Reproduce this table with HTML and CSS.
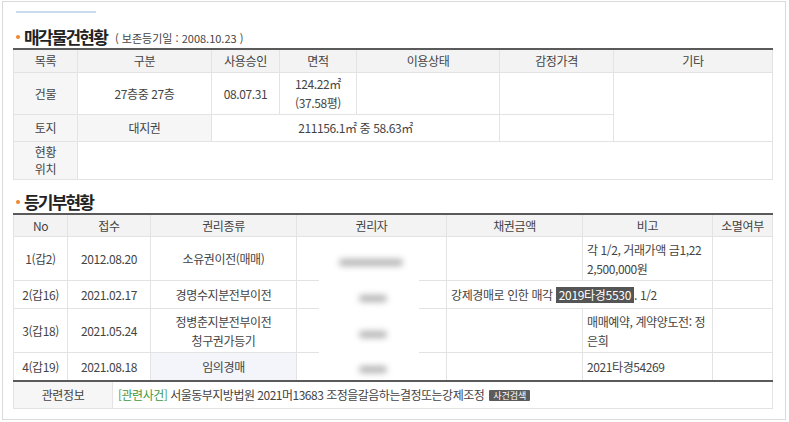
FILE: index.html
```html
<!DOCTYPE html>
<html lang="ko">
<head>
<meta charset="utf-8">
<title>매각물건현황</title>
<link rel="stylesheet" href="styles.css">
</head>
<body>
<div class="frame">
  <div class="topbar"></div>
  <h3 class="title"><span class="dot"></span>매각물건현황<small class="sub">( 보존등기일 : 2008.10.23 )</small></h3>
  <table class="tbl t1">
    <colgroup>
      <col style="width:64px"><col style="width:134px"><col style="width:68px"><col style="width:77px"><col style="width:143px"><col style="width:114px"><col style="width:159px">
    </colgroup>
    <tr class="hd">
      <th>목록</th><th>구분</th><th>사용승인</th><th>면적</th><th>이용상태</th><th>감정가격</th><th>기타</th>
    </tr>
    <tr class="r-bld">
      <td class="lbl">건물</td><td>27층중 27층</td><td>08.07.31</td><td>124.22㎡<br>(37.58평)</td><td></td><td></td><td rowspan="2"></td>
    </tr>
    <tr class="r-land">
      <td class="lbl">토지</td><td class="lbl">대지권</td><td colspan="3">211156.1㎡ 중 58.63㎡</td><td></td>
    </tr>
    <tr class="r-loc">
      <td class="lbl loc">현황<br>위치</td><td colspan="6"></td>
    </tr>
  </table>

  <h3 class="title t2title"><span class="dot"></span>등기부현황</h3>
  <table class="tbl t2">
    <colgroup>
      <col style="width:54px"><col style="width:83px"><col style="width:146px"><col style="width:150px"><col style="width:136px"><col style="width:130px"><col style="width:60px">
    </colgroup>
    <tr class="hd">
      <th>No</th><th>접수</th><th>권리종류</th><th>권리자</th><th>채권금액</th><th>비고</th><th>소멸여부</th>
    </tr>
    <tr class="r2">
      <td>1(갑2)</td><td>2012.08.20</td><td>소유권이전(매매)</td><td></td><td></td><td class="left">각 1/2, 거래가액 금1,22<br>2,500,000원</td><td></td>
    </tr>
    <tr class="r1">
      <td>2(갑16)</td><td>2021.02.17</td><td>경명수지분전부이전</td><td></td><td colspan="2" class="left">강제경매로 인한 매각 <span class="badge">2019타경5530</span>. 1/2</td><td></td>
    </tr>
    <tr class="r2">
      <td>3(갑18)</td><td>2021.05.24</td><td>정병춘지분전부이전<br>청구권가등기</td><td></td><td></td><td class="left">매매예약, 계약양도전: 정<br>은희</td><td></td>
    </tr>
    <tr class="r1 last">
      <td>4(갑19)</td><td>2021.08.18</td><td class="hl">임의경매</td><td></td><td></td><td class="left">2021타경54269</td><td></td>
    </tr>
  </table>
  <table class="tbl t3">
    <colgroup><col style="width:99px"><col style="width:660px"></colgroup>
    <tr>
      <td class="lbl">관련정보</td>
      <td class="left rel"><span class="green">[관련사건]</span> 서울동부지방법원 2021머13683 조정을갈음하는결정또는강제조정 <span class="btn">사건검색</span></td>
    </tr>
  </table>

  <div class="mask">
    <span class="blob b1"></span>
    <span class="blob b2"></span>
    <span class="blob b3"></span>
    <span class="blob b4"></span>
  </div>
</div>
</body>
</html>
```
FILE: styles.css
```css
* { box-sizing: border-box; }
html, body { margin: 0; padding: 0; background: #fff; }
body {
  font-family: "Noto Sans CJK KR", "Noto Sans", sans-serif;
  font-size: 12px;
  color: #444;
}
.frame {
  position: relative;
  margin: 1px 0 0 2px;
  width: 784px;
  height: 419px;
  border: 1px solid #dadada;
  padding: 9px 0 0 10px;
}
.topbar {
  width: 80px;
  height: 2px;
  margin-left: 3px;
  background: #c9dcef;
}
.title {
  display: flex;
  align-items: center;
  height: 24px;
  margin: 11px 0 0 0;
  font-size: 17px;
  font-weight: bold;
  color: #222;
  letter-spacing: -1.8px;
}
.t2title { margin-top: 10px; height: 23px; }
.dot {
  width: 4px;
  height: 4px;
  border-radius: 50%;
  background: #f0862a;
  margin: 2px 4px 0 3px;
}
.sub {
  font-size: 11px;
  font-weight: normal;
  color: #444;
  letter-spacing: 0;
  margin: 3px 0 0 8px;
}
.tbl {
  border-collapse: collapse;
  table-layout: fixed;
  width: 759px;
}
.tbl th, .tbl td {
  border: 1px solid #e3e3e3;
  text-align: center;
  vertical-align: middle;
  padding: 0 4px;
  line-height: 19px;
  font-weight: normal;
  color: #444;
  letter-spacing: -0.4px;
}
.tbl tr.hd th {
  background: #f3f3f3;
  border-top: 2px solid #5a5a5a;
  height: 23px;
}
.tbl td.lbl { background: #f6f6f6; }
.tbl td.loc { line-height: 17px; }
.tbl td.left { text-align: left; }
.tbl td.hl { background: #f3f5fb; }
.t1 .r-bld td { height: 42px; }
.t1 .r-land td { height: 27px; }
.t1 .r-loc td { height: 38px; }
.t2 .r1 td { height: 28px; }
.t2 .r2 td { height: 44px; }
.t2 tr.last td { border-bottom: none; height: 27px; }
.t3 td {
  height: 28px;
  border-top: 2px solid #5a5a5a;
}
.t3 td.rel { padding-left: 5px; letter-spacing: -0.5px; }
.badge {
  display: inline-block;
  background: #555;
  color: #fff;
  padding: 0 3px;
  line-height: 16px;
  letter-spacing: -0.3px;
}
.green { color: #3f9a3f; }
.btn {
  display: inline-block;
  background: #5b5b5b;
  color: #fff;
  font-size: 9px;
  line-height: 11px;
  padding: 0 4px;
  border-radius: 1px;
  vertical-align: 1px;
  margin-left: 2px;
  letter-spacing: 0;
}
.mask {
  position: absolute;
  left: 316px;
  top: 244px;
  width: 100px;
  height: 129px;
  background: #fff;
}
.blob {
  position: absolute;
  height: 7px;
  background: #b4b4b4;
  border-radius: 4px;
  filter: blur(3px);
}
.b1 { left: 20px; top: 13px; width: 64px; }
.b2 { left: 40px; top: 49px; width: 28px; }
.b3 { left: 40px; top: 85px; width: 28px; }
.b4 { left: 40px; top: 120px; width: 28px; }
```
